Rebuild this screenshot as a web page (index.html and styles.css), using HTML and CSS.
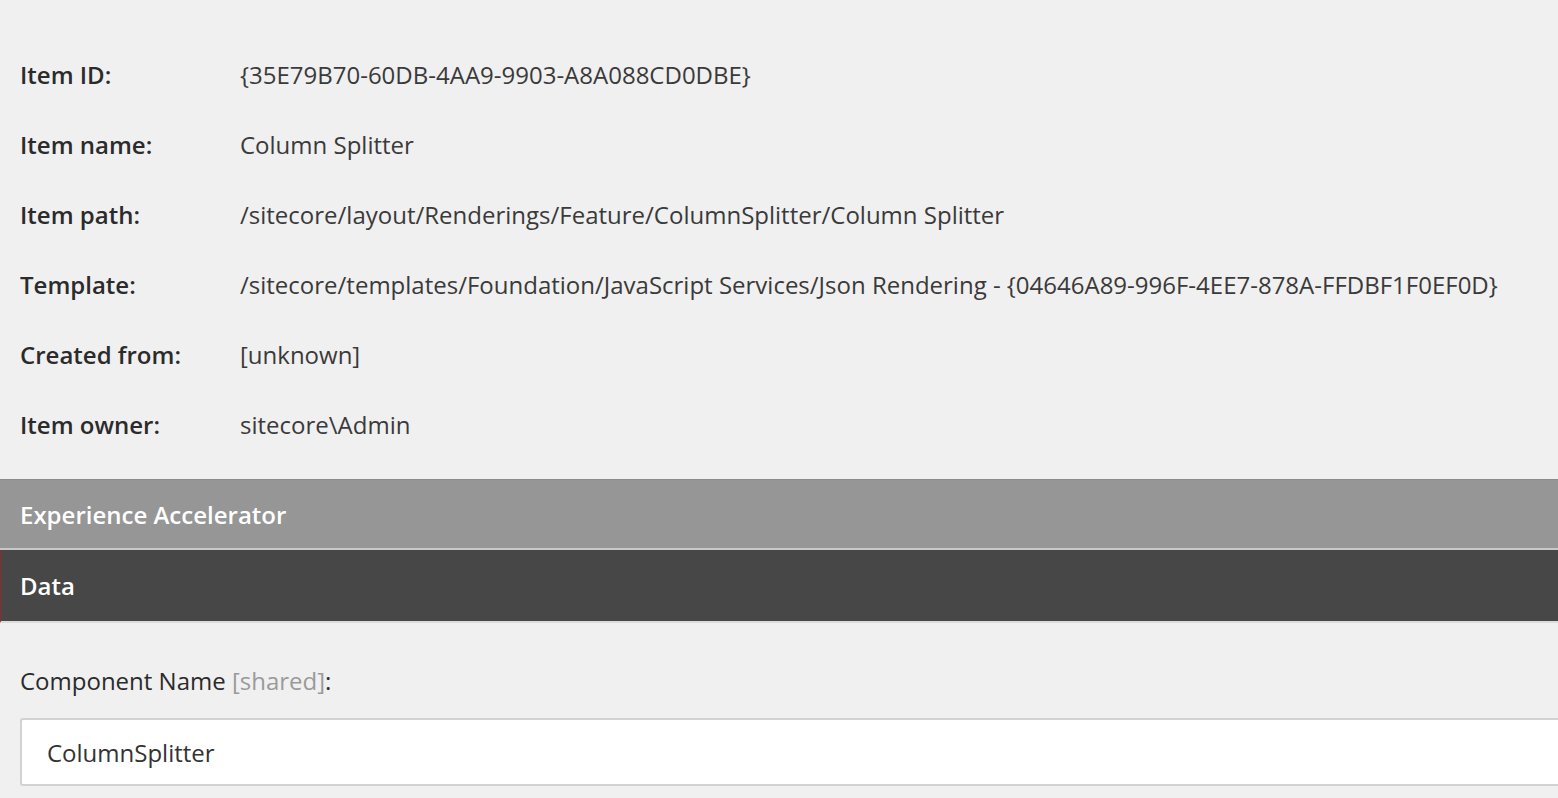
FILE: index.html
```html
<!DOCTYPE html>
<html>
<head>
<meta charset="utf-8">
<link rel="stylesheet" href="styles.css">
</head>
<body>
<div class="page">
  <div class="info">
    <div class="row"><div class="label">Item ID:</div><div class="value">{35E79B70-60DB-4AA9-9903-A8A088CD0DBE}</div></div>
    <div class="row"><div class="label">Item name:</div><div class="value">Column Splitter</div></div>
    <div class="row"><div class="label">Item path:</div><div class="value">/sitecore/layout/Renderings/Feature/ColumnSplitter/Column Splitter</div></div>
    <div class="row"><div class="label">Template:</div><div class="value">/sitecore/templates/Foundation/JavaScript Services/Json Rendering - {04646A89-996F-4EE7-878A-FFDBF1F0EF0D}</div></div>
    <div class="row"><div class="label">Created from:</div><div class="value">[unknown]</div></div>
    <div class="row"><div class="label">Item owner:</div><div class="value">sitecore\Admin</div></div>
  </div>
  <div class="section section-light">Experience Accelerator</div>
  <div class="section section-dark">Data</div>
  <div class="field">
    <div class="field-label">Component Name <span class="shared">[shared]</span>:</div>
    <div class="input">ColumnSplitter</div>
  </div>
</div>
</body>
</html>
```
FILE: styles.css
```css
html, body {
  margin: 0;
  padding: 0;
  background: #f0f0f0;
}
body {
  font-family: "Open Sans", "Noto Sans", sans-serif;
  font-size: 24px;
  color: #333;
  overflow: hidden;
}
.page {
  width: 1558px;
  height: 798px;
  overflow: hidden;
}
.info {
  padding-top: 39px;
  padding-bottom: 20px;
}
.row {
  display: flex;
  height: 70px;
  align-items: center;
}
.label {
  width: 220px;
  padding-left: 20px;
  font-weight: 600;
  color: #2b2b2b;
  flex-shrink: 0;
}
.value {
  color: #3a3a3a;
  white-space: nowrap;
}
.section {
  display: flex;
  align-items: center;
  padding-left: 20px;
  font-weight: 600;
  color: #fff;
  box-sizing: border-box;
}
.section-light {
  height: 71px;
  background: #969696;
  border-top: 1px solid #8a8a8a;
  border-bottom: 2px solid #c9c9c9;
}
.section-dark {
  height: 73px;
  background: #474747;
  border-left: 1px solid #8d2a2a;
  padding-left: 19px;
  border-bottom: 2px solid #dcdcdc;
}
.field {
  padding: 42px 0 0 20px;
}
.field-label {
  color: #2b2b2b;
  line-height: 32px;
}
.shared {
  color: #9a9a9a;
}
.input {
  margin-top: 21px;
  height: 68px;
  box-sizing: border-box;
  background: #fff;
  border: 2px solid #d2d2d2;
  border-right: none;
  border-radius: 3px 0 0 3px;
  display: flex;
  align-items: center;
  padding-left: 25px;
  color: #333;
}
```
